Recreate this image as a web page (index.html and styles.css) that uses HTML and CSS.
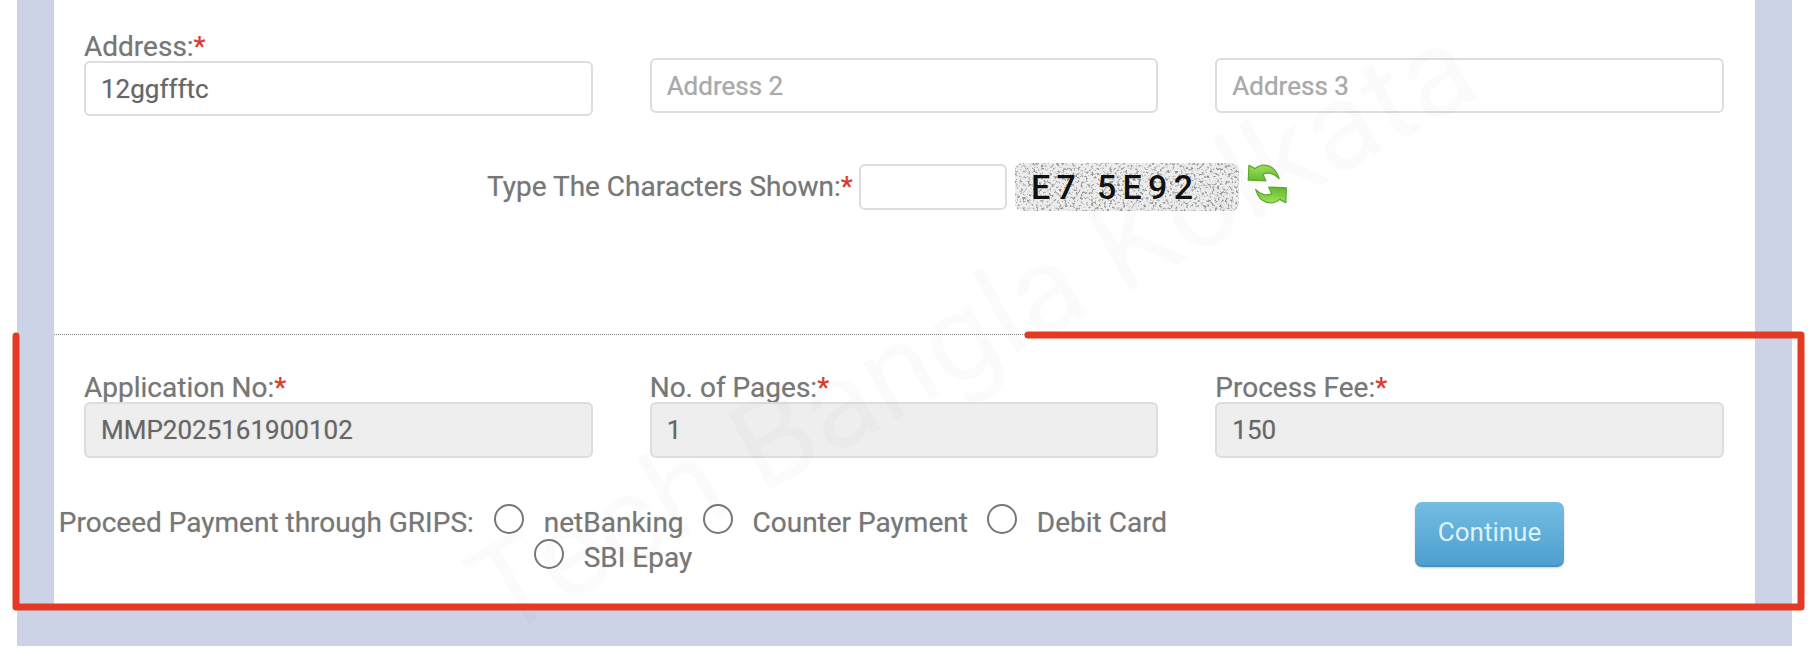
FILE: index.html
```html
<!DOCTYPE html>
<html lang="en">
<head>
  <meta charset="UTF-8">
  <meta name="viewport" content="width=device-width, initial-scale=1">
  <title>Apply - Payment</title>
  <link rel="stylesheet" href="styles.css">
</head>
<body>
  <div class="page">
    <div class="panel">
      <div class="section section-top">
        <div class="field-grid">
          <div class="field">
            <label>Address:<span class="req">*</span></label>
            <input class="text-input" type="text" value="12ggffftc">
          </div>
          <div class="field field-nolabel">
            <input class="text-input" type="text" placeholder="Address 2">
          </div>
          <div class="field field-nolabel">
            <input class="text-input" type="text" placeholder="Address 3">
          </div>
        </div>

        <div class="captcha-row">
          <label>Type The Characters Shown:<span class="req">*</span></label>
          <input class="text-input captcha-input" type="text">
          <svg class="captcha-img" width="224" height="48" viewBox="0 0 224 48">
            <defs>
              <filter id="noise" x="0" y="0" width="100%" height="100%">
                <feTurbulence type="fractalNoise" baseFrequency="0.38" numOctaves="3" seed="7"/>
                <feColorMatrix type="matrix" values="0 0 0 0 0.3  0 0 0 0 0.3  0 0 0 0 0.3  5 0 0 0 -2.6"/>
                <feGaussianBlur stdDeviation="0.45"/>
              </filter>
              <clipPath id="captcha-clip">
                <rect width="224" height="48" rx="8"/>
              </clipPath>
            </defs>
            <g clip-path="url(#captcha-clip)">
              <rect width="224" height="48" fill="#ededed"/>
              <rect width="224" height="48" filter="url(#noise)"/>
            </g>
            <text x="16" y="36" textLength="162" class="captcha-text">E7 5E92</text>
          </svg>
          <svg class="refresh-icon" width="41" height="44" viewBox="18 18 128 134">
            <defs>
              <linearGradient id="green" x1="0" y1="0" x2="0" y2="1">
                <stop offset="0" stop-color="#a2e05c"/>
                <stop offset="1" stop-color="#62bc2e"/>
              </linearGradient>
            </defs>
            <path id="arrow" d="M24 27 L43 37 C62 20 104 18 118 68 C102 50 82 47 68 55 L77 75 L22 73 Z" fill="url(#green)" stroke="#5fa831" stroke-width="4" stroke-linejoin="round"/>
            <use href="#arrow" transform="rotate(180 81.5 85)"/>
          </svg>
        </div>
      </div>

      <div class="section section-fees">
        <div class="field-grid">
          <div class="field">
            <label>Application No:<span class="req">*</span></label>
            <input class="text-input" type="text" value="MMP2025161900102" disabled>
          </div>
          <div class="field">
            <label>No. of Pages:<span class="req">*</span></label>
            <input class="text-input" type="text" value="1" disabled>
          </div>
          <div class="field">
            <label>Process Fee:<span class="req">*</span></label>
            <input class="text-input" type="text" value="150" disabled>
          </div>
        </div>
      </div>

      <div class="pay-row">
        <div class="pay-options">
          <span class="pay-title">Proceed Payment through GRIPS:</span>
          <input class="radio" type="radio" name="pay"><span class="pay-name">netBanking</span>
          <input class="radio" type="radio" name="pay"><span class="pay-name">Counter Payment</span>
          <input class="radio" type="radio" name="pay"><span class="pay-name">Debit Card</span>
          <input class="radio" type="radio" name="pay"><span class="pay-name">SBI Epay</span>
        </div>
        <button class="continue-btn" type="button">Continue</button>
      </div>
    </div>
  </div>

  <div class="watermark">Tech Bangla Kolkata</div>

  <svg class="markup" width="1816" height="654" viewBox="0 0 1816 654">
    <path d="M1028 335 H1801 V607 H16 V336" fill="none" stroke="#e43a24" stroke-width="7" stroke-linecap="round" stroke-linejoin="round"/>
  </svg>
</body>
</html>
```

FILE: styles.css
```css
html, body {
  margin: 0;
  height: 654px;
  overflow: hidden;
  background: #fff;
}
body {
  position: relative;
  font-family: Roboto, "Liberation Sans", sans-serif;
  font-size: 28px;
  color: #777;
  text-shadow: 0 0 1px rgba(119, 119, 119, 0.5);
}
.page {
  margin-left: 17px;
  width: 1775px;
  height: 646px;
  box-sizing: border-box;
  padding: 0 37px;
  background: #cdd3e6;
}
.panel {
  height: 605px;
  background: #fff;
}
.section {
  padding: 0 31px 0 30px;
}
.section-top {
  height: 335px;
  box-sizing: border-box;
  padding-top: 30px;
  border-bottom: 1px dotted #8a8a8a;
}
.section-fees {
  padding-top: 36px;
}
.field-grid {
  display: grid;
  grid-template-columns: repeat(3, 1fr);
  column-gap: 57px;
}
.field {
  display: flex;
  flex-direction: column;
}
.field label {
  height: 31px;
  line-height: 33px;
  white-space: nowrap;
}
.field-nolabel {
  padding-top: 28px;
}
.req {
  color: #e0392b;
}
.text-input {
  box-sizing: border-box;
  width: 100%;
  height: 55px;
  padding: 0 15px;
  font-family: inherit;
  font-size: 26px;
  color: #666;
  text-shadow: 0 0 1px rgba(102, 102, 102, 0.4);
  background: #fff;
  border: 2px solid #ddd;
  border-radius: 6px;
  outline: none;
}
.text-input::placeholder {
  color: #aaa;
}
.text-input:disabled {
  height: 56px;
  background: #eee;
  color: #666;
  -webkit-text-fill-color: #666;
  opacity: 1;
}
.captcha-row {
  display: flex;
  align-items: flex-start;
  padding: 47px 0 0 403px;
}
.captcha-row label {
  line-height: 46px;
  margin-top: 1px;
  white-space: nowrap;
}
.captcha-input {
  width: 148px;
  height: 46px;
  margin: 1px 8px 0 6px;
}
.captcha-img {
  display: block;
  flex: none;
}
.captcha-text {
  font-family: Roboto, sans-serif;
  font-size: 34px;
  font-weight: 500;
  fill: #111;
  text-shadow: none;
}
.refresh-icon {
  display: block;
  flex: none;
  margin: -1px 0 0 8px;
}
.pay-row {
  display: flex;
  align-items: flex-start;
  margin-top: 46px;
}
.pay-options {
  width: 1130px;
  padding-top: 1px;
  line-height: 35px;
  text-align: center;
}
.pay-title {
  margin-right: 13px;
}
.pay-name {
  margin-right: 12px;
  white-space: nowrap;
}
.radio {
  appearance: none;
  box-sizing: border-box;
  width: 30px;
  height: 30px;
  margin: -8px 20px -8px 0;
  vertical-align: 6px;
  background: #fff;
  border: 2px solid #777;
  border-radius: 50%;
}
.continue-btn {
  flex: none;
  width: 149px;
  height: 65px;
  margin: -2px 0 0 231px;
  padding: 0 0 4px;
  font-family: inherit;
  font-size: 26px;
  color: #dcf3fb;
  background: linear-gradient(#74bde2, #4e9fd1);
  border: none;
  border-bottom: 2px solid #4a90bd;
  border-radius: 7px;
  box-shadow: 0 1px 2px rgba(0, 0, 0, 0.2);
}
.watermark {
  position: absolute;
  left: 410px;
  top: 268px;
  font-size: 124px;
  line-height: 1;
  white-space: nowrap;
  color: rgba(0, 0, 0, 0.016);
  text-shadow: none;
  transform: rotate(-29deg);
  pointer-events: none;
}
.markup {
  position: absolute;
  left: 0;
  top: 0;
  pointer-events: none;
}
```
